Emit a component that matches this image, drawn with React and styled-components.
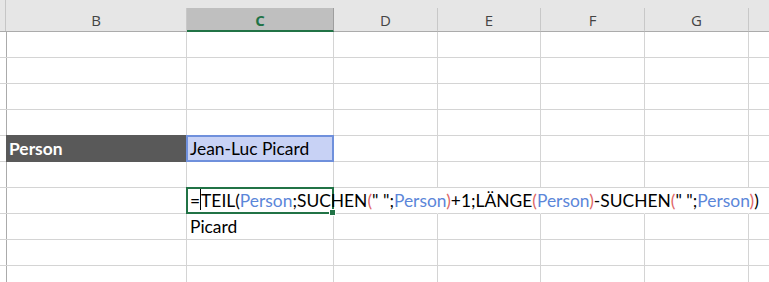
import styled, { createGlobalStyle } from "styled-components";

const Global = createGlobalStyle`
  html, body {
    margin: 0;
    padding: 0;
    background: #ffffff;
    overflow: hidden;
  }
  body {
    font-family: "Lato", "Liberation Sans", sans-serif;
  }
`;

const COLS = [
  { key: "stub", width: 6, label: "" },
  { key: "B", width: 181, label: "B" },
  { key: "C", width: 147, label: "C", active: true },
  { key: "D", width: 104, label: "D" },
  { key: "E", width: 103, label: "E" },
  { key: "F", width: 104, label: "F" },
  { key: "G", width: 104, label: "G" },
  { key: "H", width: 40, label: "" },
];

const template = COLS.map((c) => `${c.width}px`).join(" ");

const Sheet = styled.div`
  width: 769px;
  height: 282px;
  overflow: hidden;
  background: #ffffff;
`;

const HeaderRow = styled.div`
  display: grid;
  grid-template-columns: ${template};
  height: 32px;
  background: #e6e6e6;
  border-bottom: 1px solid #ababab;
  box-sizing: border-box;
`;

const HeaderCell = styled.div`
  display: flex;
  align-items: flex-end;
  height: 31px;
  border-right: ${(p) => (p.$stub ? "1px solid #c6c6c6" : "none")};
  box-sizing: border-box;
`;

const HeaderLabel = styled.div`
  flex: 1;
  height: 24px;
  display: flex;
  align-items: center;
  justify-content: center;
  box-sizing: border-box;
  font-family: "Open Sans", "Liberation Sans", sans-serif;
  font-size: 15px;
  color: ${(p) => (p.$active ? "#217346" : "#444444")};
  font-weight: ${(p) => (p.$active ? 700 : 400)};
  background: ${(p) => (p.$active ? "#bfbfbf" : "transparent")};
  border-bottom: ${(p) => (p.$active ? "2px solid #217346" : "2px solid transparent")};
  border-right: 1px solid ${(p) => (p.$active ? "#9e9e9e" : "#c8c8c8")};
  margin-bottom: -1px;
  padding-top: 1px;
`;

const Row = styled.div`
  display: grid;
  grid-template-columns: ${template};
  height: 26px;
`;

const Cell = styled.div`
  position: relative;
  box-sizing: border-box;
  height: 26px;
  border-right: ${(p) => (p.$open ? "1px solid transparent" : "1px solid #d4d4d4")};
  border-bottom: 1px solid #d4d4d4;
  display: flex;
  align-items: flex-end;
  padding: 0 3px 1px 3px;
  font-size: 17.4px;
  line-height: 22px;
  color: #000000;
  white-space: nowrap;
  overflow: visible;
  ${(p) => p.$stub && "border-right-color: #ababab;"}
  ${(p) => p.$over && "z-index: 2;"}
`;

const LabelCell = styled(Cell)`
  background: #595959;
  color: #ffffff;
  font-weight: 700;
  margin-top: -1px;
  height: 27px;
  border-bottom-color: #595959;
  border-right-color: #595959;
`;

const RefCell = styled(Cell)`
  margin: -1px 0 0 -1px;
  height: 27px;
  background: #c8d2f5;
  border: 2px solid #6f90dc;
  padding: 0 2px 0 2px;
  z-index: 2;
`;

const ActiveCell = styled(Cell)`
  margin: -1px 0 0 -1px;
  height: 27px;
  border: 2px solid #217346;
  padding: 0 2px 0 2px;
  z-index: 3;
`;

const FillHandle = styled.span`
  position: absolute;
  right: -4px;
  bottom: -4px;
  width: 5px;
  height: 5px;
  background: #217346;
  border: 1px solid #ffffff;
`;

const Caret = styled.span`
  display: inline-block;
  width: 1px;
  height: 21px;
  background: #000000;
  margin: 0 0 -3px 0;
`;

const Ref = styled.span`
  color: #5b86d9;
`;

const Paren = styled.span`
  color: #e06666;
`;

const Formula = () => (
  <span>
    =<Caret />TEIL(<Ref>Person</Ref>;SUCHEN<Paren>(</Paren>" ";<Ref>Person</Ref>
    <Paren>)</Paren>+1;LÄNGE<Paren>(</Paren>
    <Ref>Person</Ref>
    <Paren>)</Paren>-SUCHEN<Paren>(</Paren>" ";<Ref>Person</Ref>
    <Paren>)</Paren>)
  </span>
);

const rowCount = 10;

export default function App() {
  const rows = Array.from({ length: rowCount }, (_, i) => i + 1);

  const renderRow = (r) => {
    return COLS.map((col, ci) => {
      const stub = col.key === "stub";
      if (r === 5 && col.key === "B") return <LabelCell key={ci}>Person</LabelCell>;
      if (r === 5 && col.key === "C") return <RefCell key={ci}>Jean-Luc Picard</RefCell>;
      if (r === 7 && col.key === "C")
        return (
          <ActiveCell key={ci} $over>
            <Formula />
            <FillHandle />
          </ActiveCell>
        );
      if (r === 8 && col.key === "C") return <Cell key={ci}>Picard</Cell>;
      const open = r === 7 && ["D", "E", "F", "G"].includes(col.key);
      return <Cell key={ci} $stub={stub} $open={open} />;
    });
  };

  return (
    <>
      <Global />
      <Sheet>
        <HeaderRow>
          {COLS.map((c) =>
            c.key === "stub" ? (
              <HeaderCell key={c.key} $stub />
            ) : (
              <HeaderCell key={c.key}>
                <HeaderLabel $active={c.active}>{c.label}</HeaderLabel>
              </HeaderCell>
            )
          )}
        </HeaderRow>
        {rows.map((r) => (
          <Row key={r}>{renderRow(r)}</Row>
        ))}
      </Sheet>
    </>
  );
}
